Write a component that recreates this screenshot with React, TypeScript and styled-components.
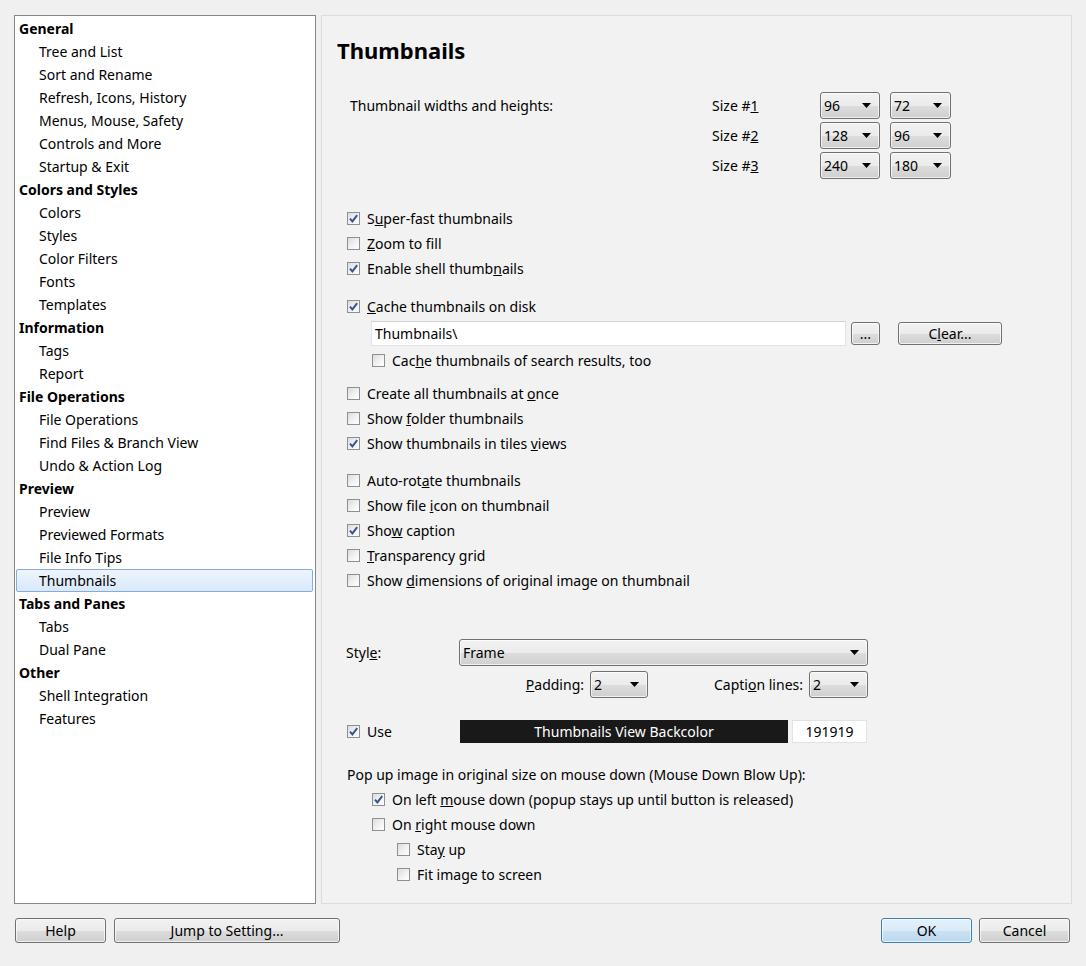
import React from 'react';
import styled, { createGlobalStyle, css } from 'styled-components';

const GlobalStyle = createGlobalStyle`
  html, body {
    margin: 0;
    padding: 0;
    background: #f0f0f0;
  }
  body {
    font-family: "Noto Sans", "Open Sans", sans-serif;
    font-size: 14px;
    color: #000;
  }
  * {
    box-sizing: border-box;
  }
`;

type TreeItem = { label: string; header?: boolean; selected?: boolean };

const TREE: TreeItem[] = [
  { label: 'General', header: true },
  { label: 'Tree and List' },
  { label: 'Sort and Rename' },
  { label: 'Refresh, Icons, History' },
  { label: 'Menus, Mouse, Safety' },
  { label: 'Controls and More' },
  { label: 'Startup & Exit' },
  { label: 'Colors and Styles', header: true },
  { label: 'Colors' },
  { label: 'Styles' },
  { label: 'Color Filters' },
  { label: 'Fonts' },
  { label: 'Templates' },
  { label: 'Information', header: true },
  { label: 'Tags' },
  { label: 'Report' },
  { label: 'File Operations', header: true },
  { label: 'File Operations' },
  { label: 'Find Files & Branch View' },
  { label: 'Undo & Action Log' },
  { label: 'Preview', header: true },
  { label: 'Preview' },
  { label: 'Previewed Formats' },
  { label: 'File Info Tips' },
  { label: 'Thumbnails', selected: true },
  { label: 'Tabs and Panes', header: true },
  { label: 'Tabs' },
  { label: 'Dual Pane' },
  { label: 'Other', header: true },
  { label: 'Shell Integration' },
  { label: 'Features' },
];

const SIZES = [
  { n: '1', w: '96', h: '72' },
  { n: '2', w: '128', h: '96' },
  { n: '3', w: '240', h: '180' },
];

function App() {
  return (
    <>
      <GlobalStyle />
      <Window>
        <Main>
          <Tree>
            {TREE.map((item, i) => (
              <TreeRow key={i} $header={item.header} $selected={item.selected}>
                {item.label}
              </TreeRow>
            ))}
          </Tree>

          <Panel>
            <Title>Thumbnails</Title>
            <Body>
              <SizeGrid>
                <Cell $row={1} $col={1}>
                  <SizeCaption>Thumbnail widths and heights:</SizeCaption>
                </Cell>
                {SIZES.map((s, i) => (
                  <React.Fragment key={s.n}>
                    <Cell $row={i + 1} $col={2}>
                      Size #<u>{s.n}</u>
                    </Cell>
                    <Cell $row={i + 1} $col={3}>
                      <Select $w={60}>{s.w}</Select>
                    </Cell>
                    <Cell $row={i + 1} $col={5}>
                      <Select $w={61}>{s.h}</Select>
                    </Cell>
                  </React.Fragment>
                ))}
              </SizeGrid>

              <Section $mt={27}>
                <Check checked>S<u>u</u>per-fast thumbnails</Check>
                <Check><u>Z</u>oom to fill</Check>
                <Check checked>Enable shell thumb<u>n</u>ails</Check>
              </Section>

              <Section $mt={13}>
                <Check checked><u>C</u>ache thumbnails on disk</Check>
                <PathRow>
                  <TextBox>Thumbnails\</TextBox>
                  <Button $w={29} $h={23}>...</Button>
                  <Button $w={104} $h={23} $ml={13}>C<u>l</u>ear...</Button>
                </PathRow>
                <Check indent={25}>Cac<u>h</u>e thumbnails of search results, too</Check>
              </Section>

              <Section $mt={8}>
                <Check>Create all thumbnails at <u>o</u>nce</Check>
                <Check>Show <u>f</u>older thumbnails</Check>
                <Check checked>Show thumbnails in tiles <u>v</u>iews</Check>
              </Section>

              <Section $mt={12}>
                <Check>Auto-rot<u>a</u>te thumbnails</Check>
                <Check>Show file <u>i</u>con on thumbnail</Check>
                <Check checked>Sho<u>w</u> caption</Check>
                <Check><u>T</u>ransparency grid</Check>
                <Check>Show <u>d</u>imensions of original image on thumbnail</Check>
              </Section>

              <StyleRow>
                <FieldLabel>Styl<u>e</u>:</FieldLabel>
                <Select $w={409}>Frame</Select>
              </StyleRow>
              <OptionRow>
                <InlineLabel><u>P</u>adding:</InlineLabel>
                <Select $w={58}>2</Select>
                <InlineLabel $ml={66}>Capti<u>o</u>n lines:</InlineLabel>
                <Select $w={59}>2</Select>
              </OptionRow>

              <UseRow>
                <UseCell>
                  <Check checked>Use</Check>
                </UseCell>
                <ColorBar>Thumbnails View Backcolor</ColorBar>
                <ValueBox>191919</ValueBox>
              </UseRow>

              <Section $mt={19}>
                <PlainRow>Pop up image in original size on mouse down (Mouse Down Blow Up):</PlainRow>
                <Check indent={25} checked>On left <u>m</u>ouse down (popup stays up until button is released)</Check>
                <Check indent={25}>On <u>r</u>ight mouse down</Check>
                <Check indent={50}>Sta<u>y</u> up</Check>
                <Check indent={50}>Fit ima<u>g</u>e to screen</Check>
              </Section>
            </Body>
          </Panel>
        </Main>

        <Footer>
          <Button $w={91} $ml={1}>Help</Button>
          <Button $w={226} $ml={8}>Jump to Setting...</Button>
          <Spacer />
          <Button $w={91} $primary>OK</Button>
          <Button $w={91} $ml={7} $mr={2}>Cancel</Button>
        </Footer>
      </Window>
    </>
  );
}

export default App;

function Check({
  checked,
  indent = 0,
  children,
}: {
  checked?: boolean;
  indent?: number;
  children: React.ReactNode;
}) {
  return (
    <CheckRow $indent={indent}>
      <Box>
        {checked && (
          <svg width="11" height="11" viewBox="0 0 11 11">
            <path d="M2 5.6 L4.4 8.4 L9.2 2.2" fill="none" stroke="#34528f" strokeWidth="1.9" />
          </svg>
        )}
      </Box>
      <span>{children}</span>
    </CheckRow>
  );
}

function Select({ $w, children }: { $w: number; children: React.ReactNode }) {
  return (
    <Combo $w={$w}>
      <span>{children}</span>
      <svg width="9" height="5" viewBox="0 0 9 5">
        <path d="M0 0 H9 L4.5 5 Z" fill="#000" />
      </svg>
    </Combo>
  );
}

const Window = styled.div`
  width: 1086px;
  height: 966px;
  padding: 15px 14px 0 14px;
  display: flex;
  flex-direction: column;
`;

const Main = styled.div`
  display: flex;
  gap: 5px;
  height: 889px;
`;

const Tree = styled.div`
  width: 302px;
  flex-shrink: 0;
  background: #fff;
  border: 1px solid #828790;
  padding: 1px 2px 0 1px;
`;

const TreeRow = styled.div<{ $header?: boolean; $selected?: boolean }>`
  height: 23px;
  display: flex;
  align-items: center;
  border: 1px solid transparent;
  border-radius: 2px;
  padding-left: ${(p) => (p.$header ? 2 : 22)}px;
  font-weight: ${(p) => (p.$header ? 700 : 400)};
  color: #000;
  white-space: nowrap;
  ${(p) =>
    p.$selected &&
    css`
      border-color: #84acdd;
      background: linear-gradient(#eef5fd, #d8e8fb);
    `}
`;

const Panel = styled.div`
  flex: 1;
  background: #f2f2f2;
  border: 1px solid #dcdcdc;
  padding-top: 20px;
`;

const Title = styled.div`
  font-size: 22px;
  font-weight: 700;
  line-height: 28px;
  margin-left: 15px;
`;

const Body = styled.div`
  padding-left: 25px;
`;

const SizeGrid = styled.div`
  margin-top: 28px;
  display: grid;
  grid-template-columns: 365px 108px 60px 10px 61px;
  grid-template-rows: repeat(3, 27px);
  row-gap: 3px;
`;

const Cell = styled.div<{ $row: number; $col: number }>`
  grid-row: ${(p) => p.$row};
  grid-column: ${(p) => p.$col};
  display: flex;
  align-items: center;
`;

const SizeCaption = styled.span`
  padding-left: 3px;
`;

const Combo = styled.div<{ $w: number }>`
  width: ${(p) => p.$w}px;
  height: 27px;
  flex-shrink: 0;
  border: 1px solid #707070;
  border-radius: 3px;
  background: linear-gradient(#f2f2f2 0%, #ebebeb 50%, #dddddd 51%, #cfcfcf 100%);
  box-shadow: inset 0 0 0 1px rgba(255, 255, 255, 0.7);
  display: flex;
  align-items: center;
  justify-content: space-between;
  padding: 0 8px 0 3px;
`;

const Section = styled.div<{ $mt: number }>`
  margin-top: ${(p) => p.$mt}px;
`;

const CheckRow = styled.div<{ $indent: number }>`
  height: 25px;
  display: flex;
  align-items: center;
  padding-left: ${(p) => p.$indent}px;
  white-space: nowrap;
`;

const Box = styled.span`
  width: 13px;
  height: 13px;
  flex-shrink: 0;
  margin-right: 7px;
  border: 1px solid #8e8f8f;
  background: linear-gradient(135deg, #dcdcdc 0%, #f4f4f4 60%, #ffffff 100%);
  display: flex;
  align-items: center;
  justify-content: center;
`;

const PathRow = styled.div`
  height: 29px;
  display: flex;
  align-items: center;
  padding-left: 24px;
  gap: 5px;
`;

const TextBox = styled.div`
  width: 475px;
  height: 25px;
  background: #fff;
  border: 1px solid #e2e3ea;
  border-top-color: #d0d2d8;
  display: flex;
  align-items: center;
  padding-left: 3px;
`;

const Button = styled.div<{ $w: number; $h?: number; $ml?: number; $mr?: number; $primary?: boolean }>`
  width: ${(p) => p.$w}px;
  height: ${(p) => p.$h ?? 25}px;
  margin-left: ${(p) => p.$ml ?? 0}px;
  margin-right: ${(p) => p.$mr ?? 0}px;
  border: 1px solid #707070;
  border-radius: 3px;
  background: linear-gradient(#f2f2f2 0%, #ebebeb 50%, #dddddd 51%, #cfcfcf 100%);
  box-shadow: inset 0 0 0 1px rgba(255, 255, 255, 0.7);
  display: flex;
  align-items: center;
  justify-content: center;
  flex-shrink: 0;
  ${(p) =>
    p.$primary &&
    css`
      border-color: #3c7fb1;
      background: linear-gradient(#e5f1fa 0%, #d9ebf8 50%, #c9e1f3 51%, #bcd8ee 100%);
      box-shadow: inset 0 0 0 1px rgba(255, 255, 255, 0.6);
    `}
`;

const StyleRow = styled.div`
  margin-top: 46px;
  height: 27px;
  display: flex;
  align-items: center;
`;

const FieldLabel = styled.div`
  width: 113px;
  margin-left: -1px;
  flex-shrink: 0;
`;

const OptionRow = styled.div`
  margin-top: 5px;
  width: 521px;
  height: 27px;
  display: flex;
  align-items: center;
  justify-content: flex-end;
`;

const InlineLabel = styled.div<{ $ml?: number }>`
  margin-left: ${(p) => p.$ml ?? 0}px;
  margin-right: 6px;
`;

const UseRow = styled.div`
  margin-top: 21px;
  height: 24px;
  display: flex;
  align-items: center;
`;

const UseCell = styled.div`
  width: 113px;
  flex-shrink: 0;
`;

const ColorBar = styled.div`
  width: 328px;
  height: 23px;
  background: #191919;
  color: #fff;
  display: flex;
  align-items: center;
  justify-content: center;
`;

const ValueBox = styled.div`
  width: 75px;
  height: 23px;
  margin-left: 4px;
  background: #fff;
  border: 1px solid #e2e3ea;
  display: flex;
  align-items: center;
  justify-content: center;
`;

const PlainRow = styled.div`
  height: 25px;
  display: flex;
  align-items: center;
  white-space: nowrap;
`;

const Footer = styled.div`
  margin-top: 14px;
  display: flex;
  align-items: center;
`;

const Spacer = styled.div`
  flex: 1;
`;
